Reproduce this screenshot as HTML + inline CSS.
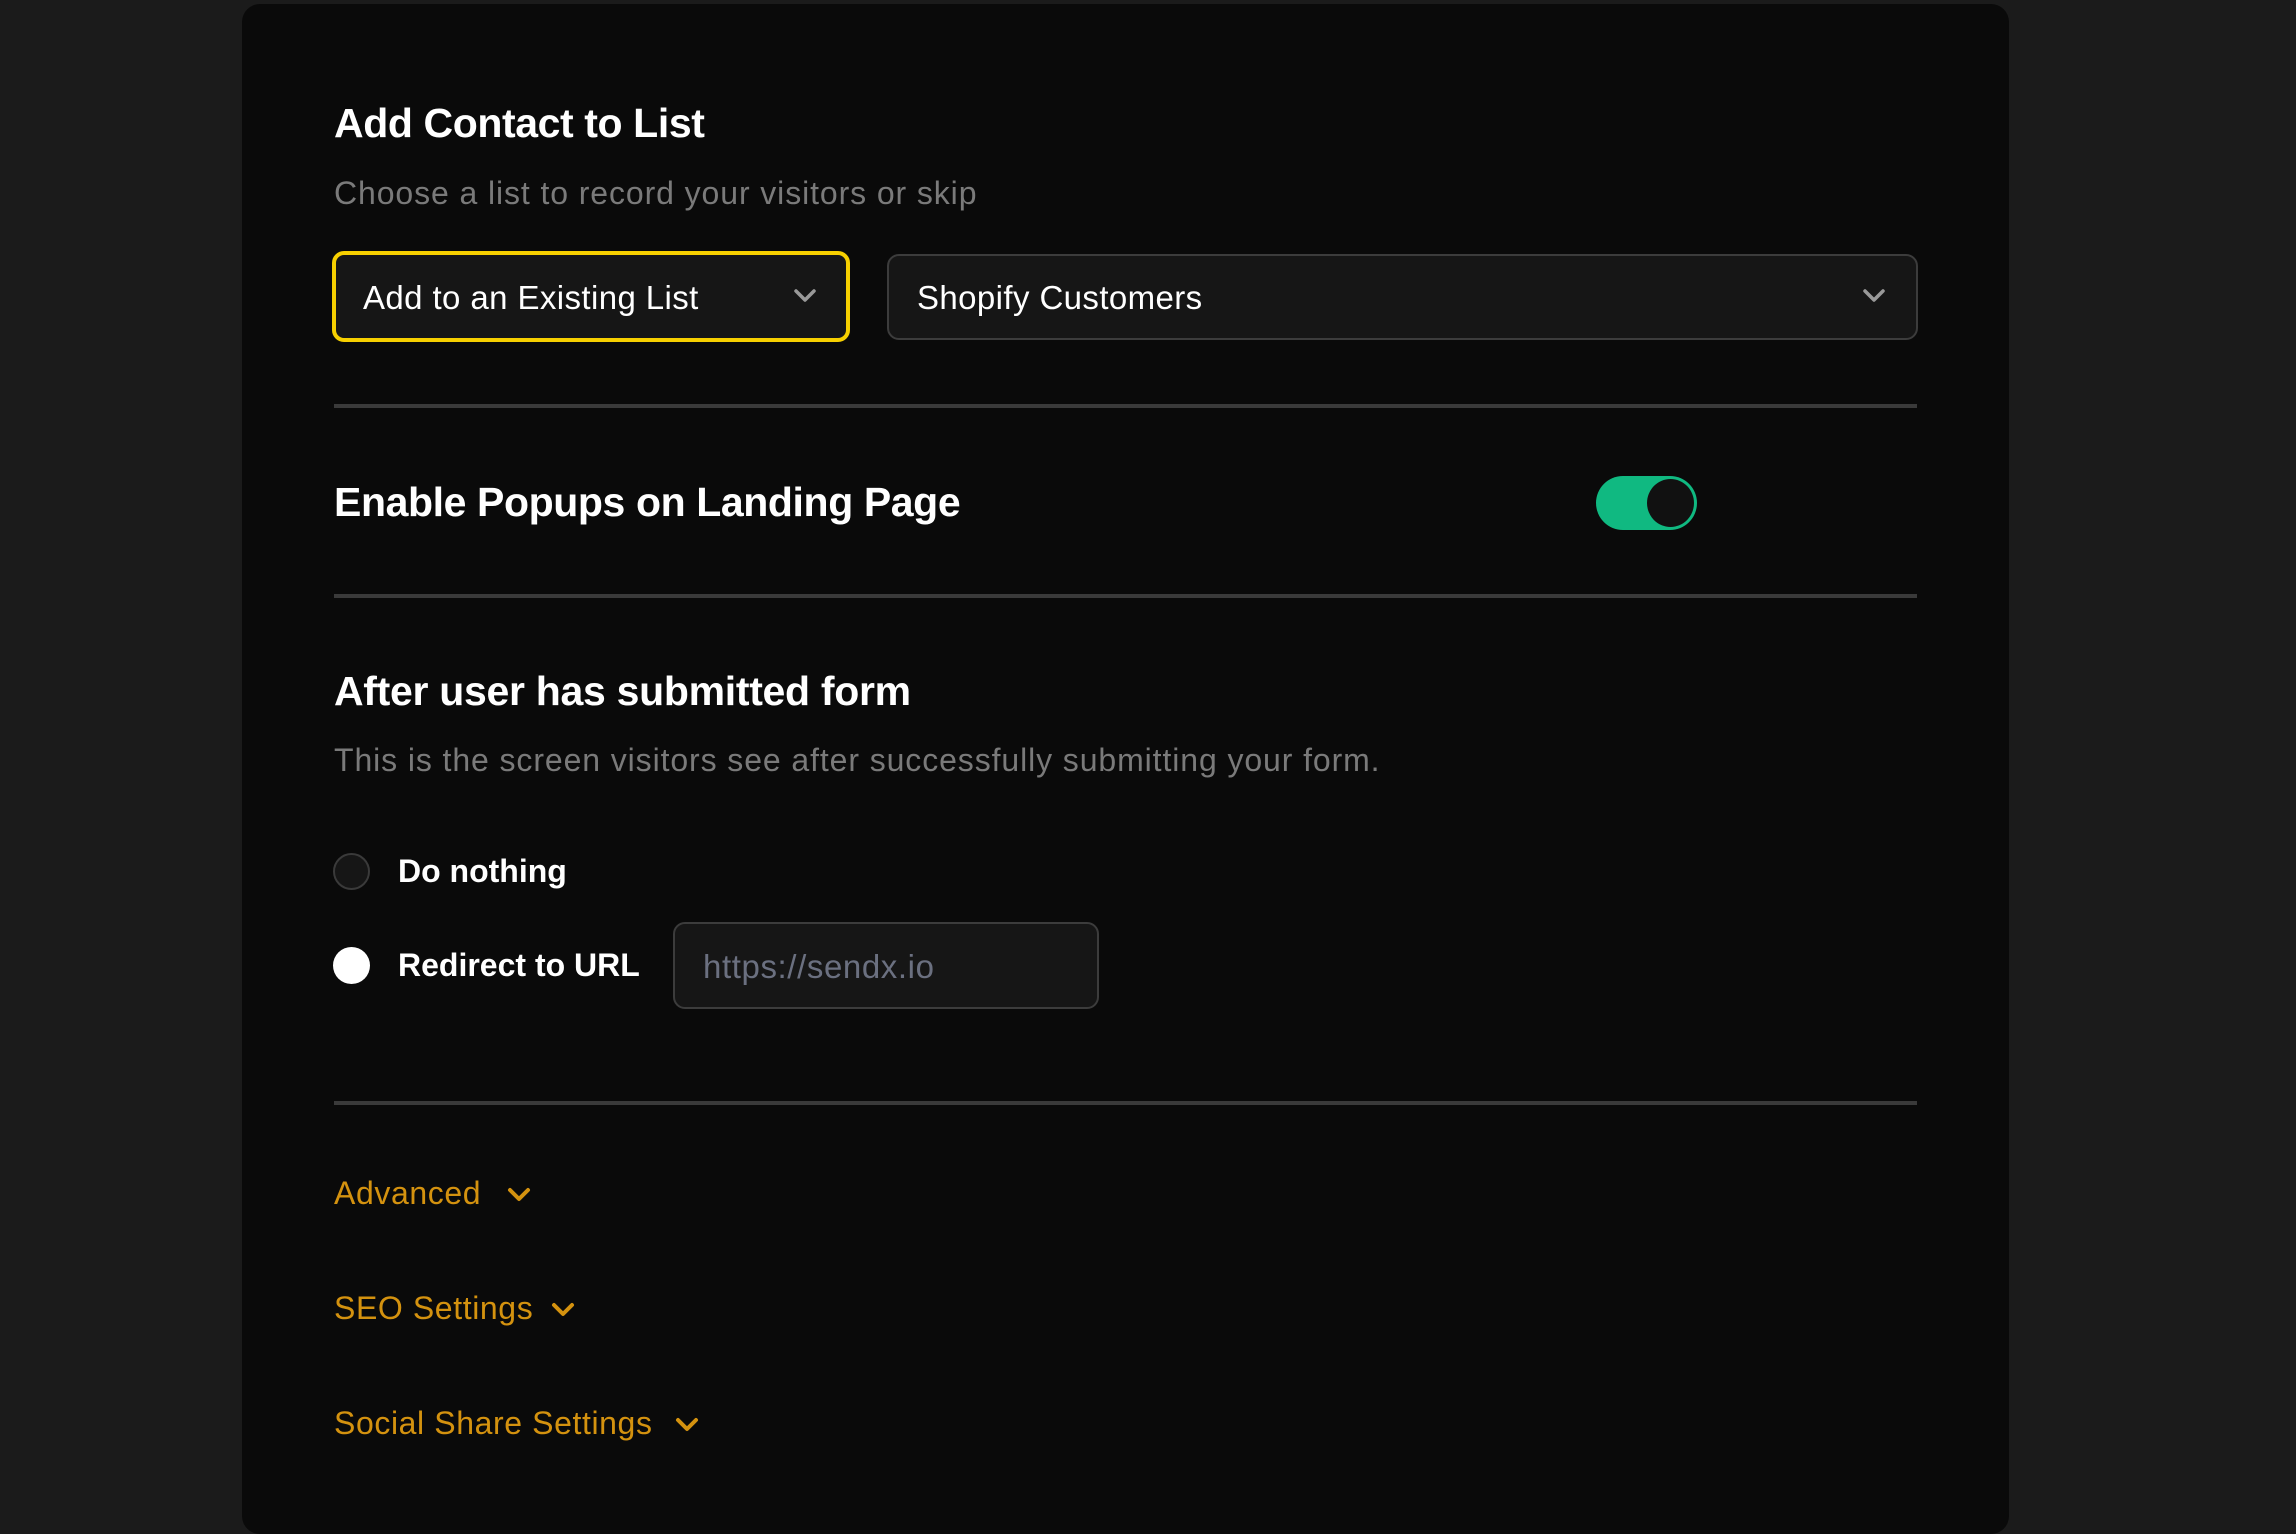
<!DOCTYPE html>
<html><head><meta charset="utf-8"><style>
*{margin:0;padding:0;box-sizing:border-box}
body{width:2296px;height:1512px;background:#1b1b1b;font-family:"Liberation Sans",sans-serif;position:relative;overflow:hidden;color:#fff}
.card{position:absolute;left:242px;top:4px;width:1767px;height:1530px;background:#0a0a0a;border-radius:18px}
.a{position:absolute;white-space:nowrap;line-height:1}
h2{font-size:41px;font-weight:700;letter-spacing:-0.4px}
.sub{font-size:32px;color:#7a7a7a;letter-spacing:0.9px}
.sel{position:absolute;background:#161616;border-radius:12px}
.div{position:absolute;left:334px;width:1583px;height:4px;background:#3a3a3a}
.link{font-size:32px;color:#d4920f;letter-spacing:0.6px}
</style></head><body>
<div class="card"></div>
<div class="a" style="left:334px;top:103px"><h2>Add Contact to List</h2></div>
<div class="a sub" style="left:334px;top:177px">Choose a list to record your visitors or skip</div>

<div class="sel" style="left:332px;top:251px;width:518px;height:91px;border:4px solid #f7d000"></div>
<div class="a" style="left:363px;top:281px;font-size:33px;letter-spacing:0.4px">Add to an Existing List</div>
<svg class="a" style="left:792px;top:287px" width="26" height="18" viewBox="0 0 26 18"><path d="M4 4l9 9 9-9" stroke="#999" stroke-width="3.5" fill="none" stroke-linecap="round" stroke-linejoin="round"/></svg>

<div class="sel" style="left:887px;top:254px;width:1031px;height:86px;border:2px solid #3c3c3c"></div>
<div class="a" style="left:917px;top:281px;font-size:33px;letter-spacing:0.4px">Shopify Customers</div>
<svg class="a" style="left:1861px;top:287px" width="26" height="18" viewBox="0 0 26 18"><path d="M4 4l9 9 9-9" stroke="#999" stroke-width="3.5" fill="none" stroke-linecap="round" stroke-linejoin="round"/></svg>

<div class="div" style="top:404px"></div>

<div class="a" style="left:334px;top:482px;font-size:41px;font-weight:700;letter-spacing:-0.4px">Enable Popups on Landing Page</div>
<div class="a" style="left:1596px;top:476px;width:101px;height:54px;border-radius:27px;background:#10b981"></div>
<div class="a" style="left:1647px;top:479px;width:47px;height:48px;border-radius:50%;background:#111;"></div>

<div class="div" style="top:594px"></div>

<div class="a" style="left:334px;top:671px;font-size:41px;font-weight:700;letter-spacing:-0.3px">After user has submitted form</div>
<div class="a sub" style="left:334px;top:744px">This is the screen visitors see after successfully submitting your form.</div>

<div class="a" style="left:333px;top:853px;width:37px;height:37px;border-radius:50%;background:#161616;border:2px solid #3a3a3a"></div>
<div class="a" style="left:398px;top:855px;font-size:32px;font-weight:700">Do nothing</div>
<div class="a" style="left:333px;top:947px;width:37px;height:37px;border-radius:50%;background:#fff"></div>
<div class="a" style="left:398px;top:949px;font-size:32px;font-weight:700">Redirect to URL</div>
<div class="sel" style="left:673px;top:922px;width:426px;height:87px;border:2px solid #3c3c3c"></div>
<div class="a" style="left:703px;top:950px;font-size:33px;color:#6b7080;letter-spacing:0.6px">https://sendx.io</div>

<div class="div" style="top:1101px"></div>

<div class="a link" style="left:334px;top:1177px">Advanced</div>
<svg class="a" style="left:506px;top:1186px" width="26" height="18" viewBox="0 0 26 18"><path d="M4 4l9 9 9-9" stroke="#d4920f" stroke-width="4" fill="none" stroke-linecap="round" stroke-linejoin="round"/></svg>
<div class="a link" style="left:334px;top:1292px">SEO Settings</div>
<svg class="a" style="left:550px;top:1301px" width="26" height="18" viewBox="0 0 26 18"><path d="M4 4l9 9 9-9" stroke="#d4920f" stroke-width="4" fill="none" stroke-linecap="round" stroke-linejoin="round"/></svg>
<div class="a link" style="left:334px;top:1407px">Social Share Settings</div>
<svg class="a" style="left:674px;top:1416px" width="26" height="18" viewBox="0 0 26 18"><path d="M4 4l9 9 9-9" stroke="#d4920f" stroke-width="4" fill="none" stroke-linecap="round" stroke-linejoin="round"/></svg>
</body></html>
